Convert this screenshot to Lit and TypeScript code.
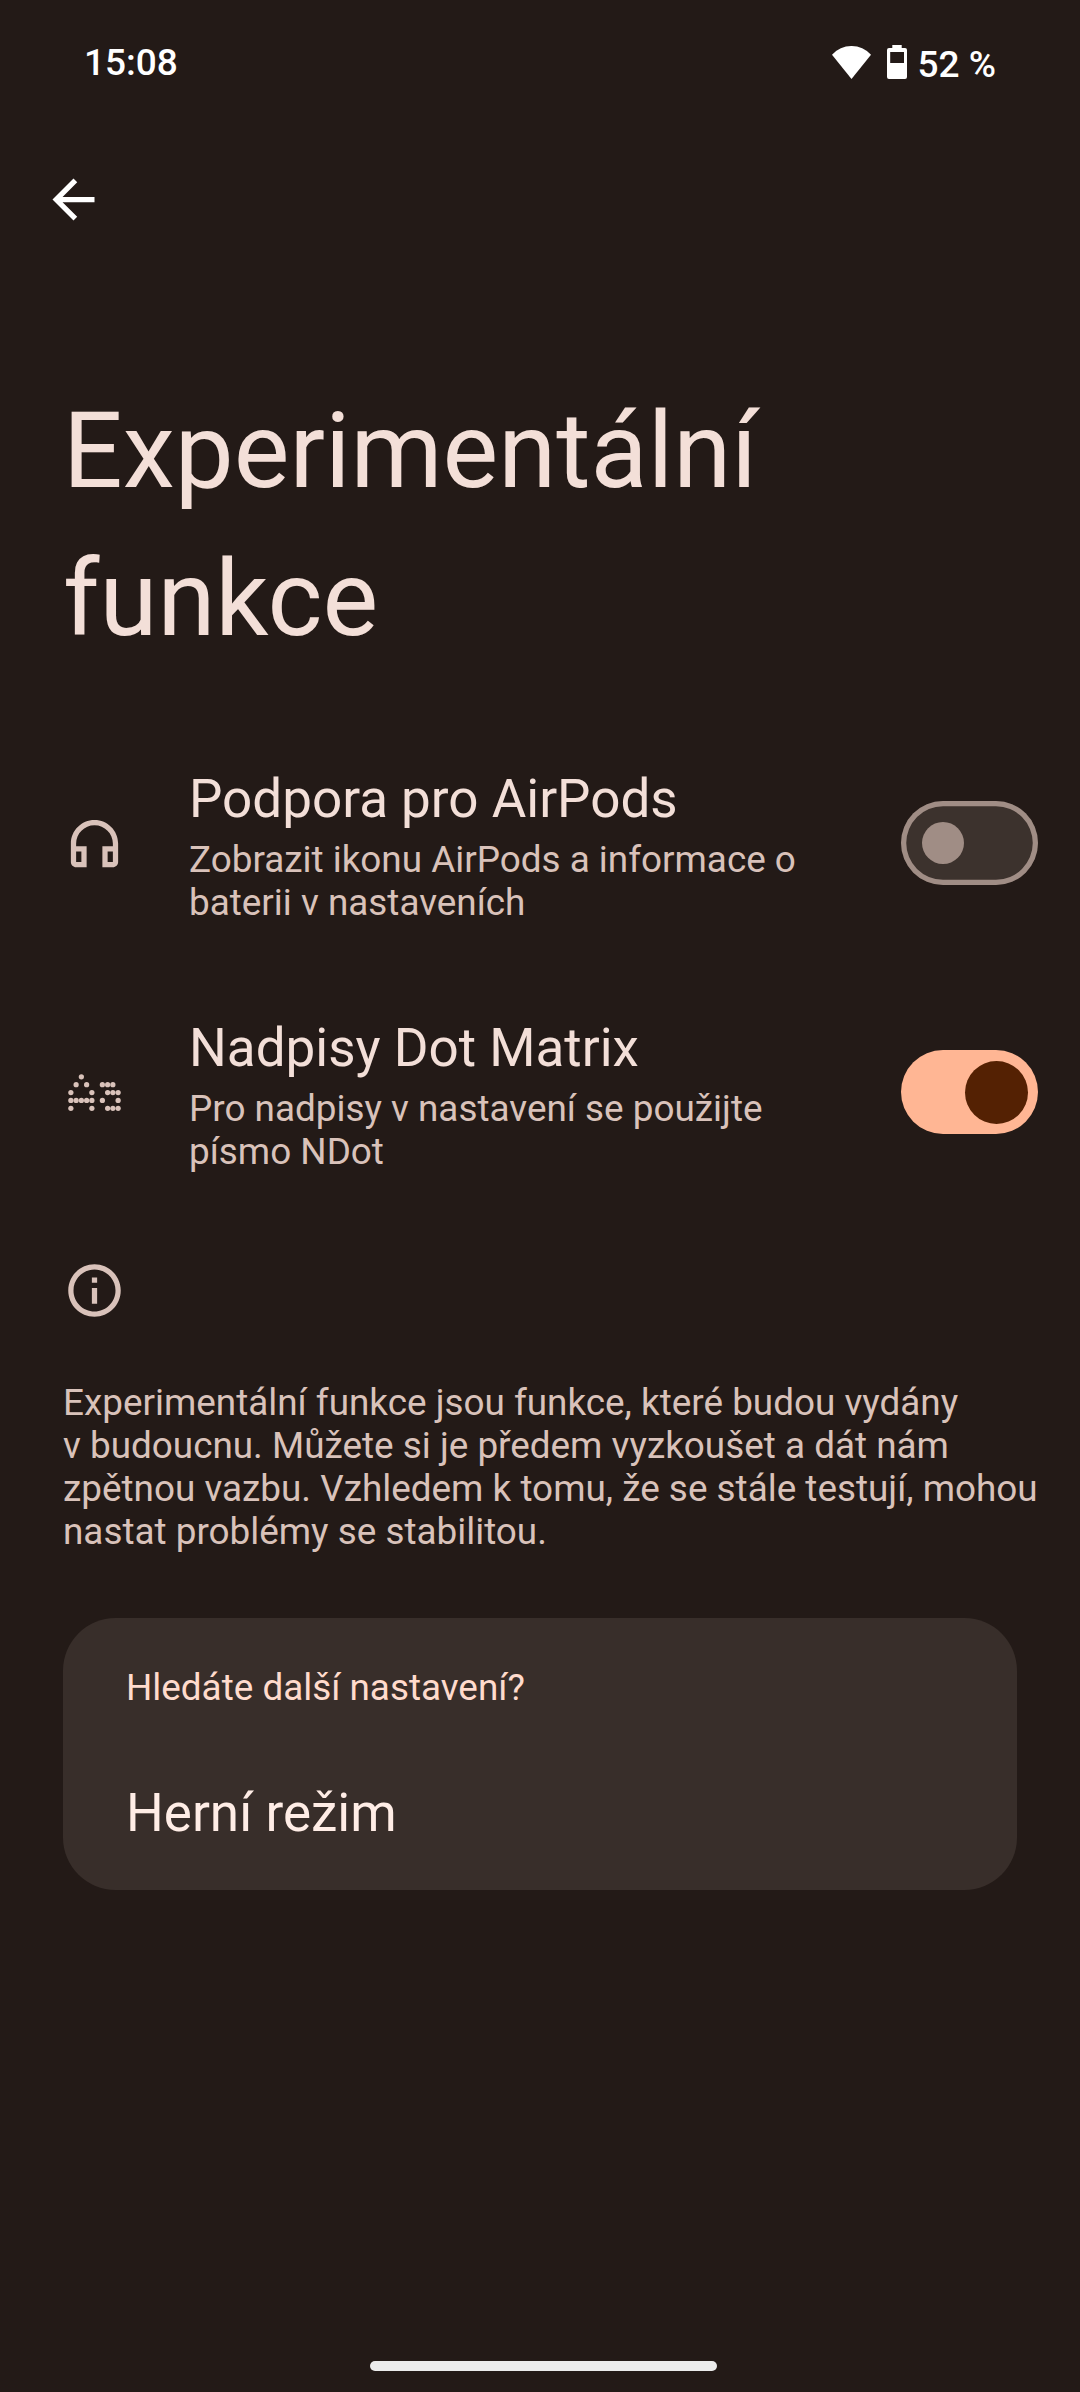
import { LitElement, html, svg, css } from "lit";
import { customElement, property, state } from "lit/decorators.js";

const DOTS: [number, number][] = [
  [7, 6], [5, 9], [9, 9], [3, 12], [11, 12],
  [3, 15], [5, 15], [7, 15], [9, 15], [11, 15], [3, 18], [11, 18],
  [15, 9], [17, 9], [19, 9], [17, 12], [19, 12], [21, 12],
  [15, 15], [21, 15], [17, 18], [19, 18], [21, 18],
];

const ICONS = {
  back: svg`<path d="M20 11H7.83l5.59-5.59L12 4l-8 8 8 8 1.41-1.41L7.83 13H20v-2z"/>`,
  headphones: svg`<path fill-rule="evenodd" d="M12 3c-4.97 0-9 4.03-9 9v7c0 1.1.9 2 2 2h4v-8H5v-1c0-3.87 3.13-7 7-7s7 3.13 7 7v1h-4v8h4c1.1 0 2-.9 2-2v-7c0-4.97-4.03-9-9-9zM7 15v4H5v-4h2zm12 4h-2v-4h2v4z"/>`,
  dots: svg`${DOTS.map(([x, y]) => svg`<circle cx=${x} cy=${y} r="1"/>`)}`,
  info: svg`<path d="M11 7h2v2h-2V7zm0 4h2v6h-2v-6zm1-9C6.48 2 2 6.48 2 12s4.48 10 10 10 10-4.48 10-10S17.52 2 12 2zm0 18c-4.41 0-8-3.59-8-8s3.59-8 8-8 8 3.59 8 8-3.59 8-8 8z"/>`,
};

type IconName = keyof typeof ICONS;

@customElement("ui-icon")
export class UiIcon extends LitElement {
  @property() name: IconName = "info";
  static styles = css`
    :host { display: block; width: 63px; height: 63px; flex: none; }
    .glyph { display: block; width: 63px; height: 63px; fill: currentColor; }
  `;
  render() {
    return html`<svg class="glyph" viewBox="0 0 24 24" aria-hidden="true">${ICONS[this.name]}</svg>`;
  }
}

@customElement("ui-switch")
export class UiSwitch extends LitElement {
  @property({ type: Boolean, reflect: true }) checked = false;
  static styles = css`
    :host { display: block; flex: none; }
    .track {
      display: flex; align-items: center; box-sizing: border-box;
      width: 136.5px; height: 84px; border-radius: 42px;
      margin: 0; padding: 0 21px; border: none;
      background: #3c322d; box-shadow: inset 0 0 0 5.25px #a08d85;
    }
    .thumb { width: 42px; height: 42px; border-radius: 50%; background: #a08d85; }
    :host([checked]) .track {
      justify-content: flex-end; padding: 0 10px;
      background: #ffb694; box-shadow: none;
    }
    :host([checked]) .thumb { width: 63px; height: 63px; background: #542103; }
  `;
  render() {
    return html`<button class="track" role="switch" aria-checked=${this.checked}><span class="thumb"></span></button>`;
  }
}

interface Setting { icon: IconName; title: string; summary: string; on: boolean; }

@customElement("app-root")
export class AppRoot extends LitElement {
  @state() private settings: Setting[] = [
    { icon: "headphones", title: "Podpora pro AirPods", summary: "Zobrazit ikonu AirPods a informace o baterii v nastaveních", on: false },
    { icon: "dots", title: "Nadpisy Dot Matrix", summary: "Pro nadpisy v nastavení se použijte písmo NDot", on: true },
  ];

  static styles = css`
    :host {
      display: flex; flex-direction: column; box-sizing: border-box;
      width: 1080px; height: 2392px; overflow: hidden;
      background: #231a17; color: #f3dfd8;
      font-family: Roboto, sans-serif; font-size: 36.87px; line-height: 43px;
    }
    .status {
      display: flex; justify-content: space-between; align-items: flex-start;
      height: 126px; padding: 41px 84px 0 84px; box-sizing: border-box;
      color: #fff; font-size: 37px; font-weight: 500;
    }
    .tray { display: flex; align-items: flex-start; }
    .wifi { display: block; width: 39px; height: 33px; margin: 5px 16px 0 0; fill: #fff; }
    .battery { display: block; width: 20px; height: 34px; margin: 4px 11px 0 0; fill: #fff; }
    .percent { padding-top: 2px; }
    .toolbar { display: flex; height: 147px; padding: 42px; box-sizing: border-box; color: #fff; }
    .heading {
      margin: 0; padding: 105px 63px 0; height: 445.5px; box-sizing: border-box;
      font-size: 105px; line-height: 148px; font-weight: 400;
    }
    .row {
      display: flex; align-items: center; height: 249px; box-sizing: border-box;
      padding: 0 42.5px 0 63px; color: #d9c2ba;
    }
    .symbol { margin-top: 1px; }
    .copy { flex: 1; padding: 6px 84px 0 63px; }
    .title { color: #f3dfd8; font-size: 53px; line-height: 62px; padding-bottom: 8px; }
    .footer { padding: 42.5px 36px 0 63px; color: #d9c2ba; }
    .note { margin: 0; padding-top: 59px; }
    .card {
      display: flex; flex-direction: column; box-sizing: border-box;
      margin: 65px 63px 0; height: 272px; padding: 48px 63px 0; border-radius: 52.5px;
      background: #382e2a;
    }
    .question { color: #ffdbcd; }
    .link { padding-top: 73px; color: #ffede6; font-size: 53px; line-height: 62px; }
    .nav { display: flex; margin-top: auto; padding: 0 0 21px 370px; }
    .pill { width: 347px; height: 10.5px; border-radius: 5.25px; background: #ececec; }
  `;

  render() {
    return html`
      <div class="status">
        <span>15:08</span>
        <div class="tray">
          <svg class="wifi" viewBox="0 0 39 33"><path d="M0 8.7A26.2 26.2 0 0 1 39 8.7L19.5 33z"/></svg>
          <svg class="battery" viewBox="0 0 20 34"><path fill-rule="evenodd" d="M5.3 0h9.4v3H18a2 2 0 0 1 2 2v27a2 2 0 0 1-2 2H2a2 2 0 0 1-2-2V5a2 2 0 0 1 2-2h3.3zM3.2 7v11h13.8V7z"/></svg>
          <span class="percent">52 %</span>
        </div>
      </div>
      <div class="toolbar"><ui-icon name="back"></ui-icon></div>
      <h1 class="heading">Experimentální<br />funkce</h1>
      ${this.settings.map((s) => html`
        <div class="row">
          <ui-icon class="symbol" name=${s.icon}></ui-icon>
          <div class="copy">
            <div class="title">${s.title}</div>
            <div>${s.summary}</div>
          </div>
          <ui-switch ?checked=${s.on}></ui-switch>
        </div>`)}
      <div class="footer">
        <ui-icon name="info"></ui-icon>
        <p class="note">Experimentální funkce jsou funkce, které budou vydány v&nbsp;budoucnu. Můžete si je předem vyzkoušet a dát nám zpětnou vazbu. Vzhledem k tomu, že se stále testují, mohou nastat problémy se stabilitou.</p>
      </div>
      <div class="card">
        <div class="question">Hledáte další nastavení?</div>
        <div class="link">Herní režim</div>
      </div>
      <div class="nav"><div class="pill"></div></div>
    `;
  }
}
